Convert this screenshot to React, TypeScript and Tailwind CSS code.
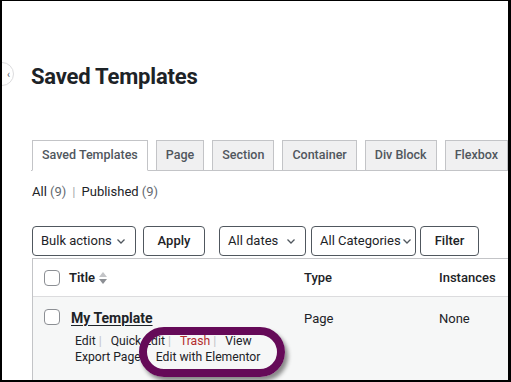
import React from 'react';

const ChevronDown = () => (
  <svg className="w-[12px] h-[12px] shrink-0" viewBox="0 0 12 12" fill="none" stroke="#50575e" strokeWidth={1.3}>
    <path d="M2.5 4.5 6 8l3.5-3.5" />
  </svg>
);

const tabs = ['Saved Templates', 'Page', 'Section', 'Container', 'Div Block', 'Flexbox'];

const Select: React.FC<{ label: string; w: string }> = ({ label, w }) => (
  <div className={`${w} shrink-0 h-[30px] flex items-center justify-between pl-[8px] pr-[8px] border border-[#50575e] rounded-[4px] bg-white text-[13px] text-[#1d2327] whitespace-nowrap`}>
    <span>{label}</span>
    <ChevronDown />
  </div>
);

const Checkbox = () => (
  <div className="w-[16px] h-[16px] border border-[#8c8f94] rounded-[4px] bg-white" />
);

const Sep = () => <span className="text-[#c3c4c7] ml-[3px] mr-[9px]">|</span>;

export default function App() {
  return (
    <div className="relative w-[511px] h-[382px] overflow-hidden bg-white border-t-[1px] border-l-[2px] border-r-[3px] border-b-[2px] border-black font-['Roboto',sans-serif] text-[#1d2327]">
      <div className="absolute left-[-12px] top-[61px] w-[24px] h-[24px] rounded-full border border-[#dcdcde] bg-white flex items-center justify-end pr-[3px] text-[10px] text-[#50575e]">‹</div>

      <div className="pl-[29px]">
        <h1 className="pt-[60px] text-[22px] font-bold leading-[32px] tracking-[-0.2px]">Saved Templates</h1>

        <div className="mt-[47px] flex items-end gap-[8px] border-b border-[#c3c4c7] h-[31px] w-[600px] pl-[1px]">
          {tabs.map((t, i) => (
            <div
              key={t}
              className={
                i === 0
                  ? 'shrink-0 whitespace-nowrap h-[31px] -mb-px px-[9px] flex items-center border border-b-white border-[#c3c4c7] bg-white text-[12.5px] font-medium text-[#50575e]'
                  : 'shrink-0 whitespace-nowrap h-[30px] px-[9px] flex items-center border border-b-0 border-[#c3c4c7] bg-[#f0f0f1] text-[12.5px] font-medium text-[#50575e]'
              }
            >
              {t}
            </div>
          ))}
        </div>

        <div className="mt-[12px] pl-[1px] text-[13px] leading-[18px]">
          All <span className="text-[#646970]">(9)</span>
          <span className="text-[#a7aaad] mx-[6px]">|</span>
          Published <span className="text-[#646970]">(9)</span>
        </div>

        <div className="mt-[25px] pl-[1px] flex items-center">
          <Select label="Bulk actions" w="w-[104px]" />
          <div className="ml-[7px] w-[62px] h-[30px] flex items-center justify-center border border-[#50575e] rounded-[4px] text-[13px] font-medium">Apply</div>
          <div className="ml-[14px]"><Select label="All dates" w="w-[87px]" /></div>
          <div className="ml-[5px]"><Select label="All Categories" w="w-[105px]" /></div>
          <div className="ml-[4px] w-[59px] h-[30px] flex items-center justify-center border border-[#50575e] rounded-[4px] text-[13px] font-medium">Filter</div>
        </div>

        <div className="mt-[2px] ml-[1px] w-[600px] border border-[#c3c4c7] text-[13px]">
          <div className="h-[38px] flex items-center border-b border-[#dcdcde] bg-white">
            <div className="w-[36px] flex justify-center pl-[2px]"><Checkbox /></div>
            <div className="w-[235px] flex items-center gap-[4px] font-semibold">
              Title
              <svg className="w-[8px] h-[12px]" viewBox="0 0 8 12"><path d="M4 0 8 5H0z" fill="#c3c4c7" /><path d="M0 7h8l-4 5z" fill="#8c8f94" /></svg>
            </div>
            <div className="w-[135px] font-medium">Type</div>
            <div className="font-medium">Instances</div>
          </div>
          <div className="h-[90px] flex bg-[#f6f7f7] pt-[12px]">
            <div className="w-[36px] flex justify-center pl-[2px]"><Checkbox /></div>
            <div className="w-[235px] pl-[2px]">
              <div className="font-bold text-[14px] underline underline-offset-2 leading-[18px]">My Template</div>
              <div className="mt-[6px] pl-[4px] text-[12.2px] leading-[16px] whitespace-nowrap">
                <div>
                  Edit<Sep />Quick Edit<Sep /><span className="text-[#b32d2e]">Trash</span><Sep />View
                </div>
                <div>
                  Export Page<Sep />Edit with Elementor
                </div>
              </div>
            </div>
            <div className="w-[135px]">Page</div>
            <div>None</div>
          </div>
        </div>
      </div>

      <div className="absolute left-[137px] top-[326px] w-[146px] h-[50px] rounded-full border-[8px] border-[#650a58] shadow-[3px_4px_4px_rgba(0,0,0,0.45)]" />
    </div>
  );
}
